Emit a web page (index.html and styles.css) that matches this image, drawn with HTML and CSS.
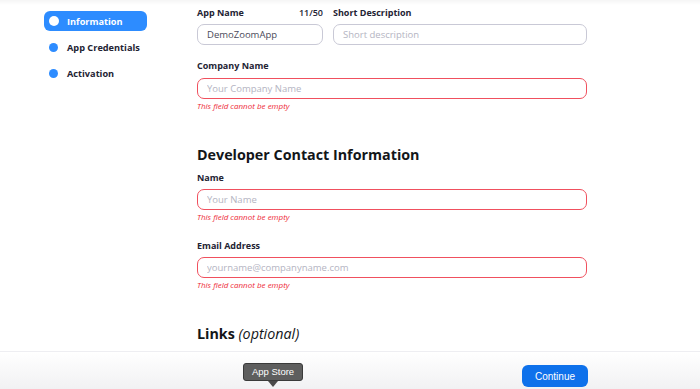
FILE: index.html
```html
<!DOCTYPE html>
<html lang="en">
<head>
  <meta charset="UTF-8">
  <title>Create App - Information</title>
  <meta name="viewport" content="width=device-width, initial-scale=1.0">
  <link rel="stylesheet" href="styles.css">
</head>
<body>

<div class="top-shade"></div>

<div class="page">
  <!-- Steps -->
  <ul class="steps">
    <li class="step active"><span class="dot"></span>Information</li>
    <li class="step"><span class="dot"></span>App Credentials</li>
    <li class="step"><span class="dot"></span>Activation</li>
  </ul>

  <!-- Form -->
  <form class="main">
    <div class="row-top">
      <div class="field app-name">
        <div class="label-line">
          <label>App Name</label>
          <span class="count">11/50</span>
        </div>
        <input type="text" value="DemoZoomApp">
      </div>
      <div class="field short-desc">
        <div class="label-line">
          <label>Short Description</label>
        </div>
        <input type="text" placeholder="Short description">
      </div>
    </div>

    <div class="field company">
      <label>Company Name</label>
      <input type="text" class="invalid" placeholder="Your Company Name">
      <p class="error">This field cannot be empty</p>
    </div>

    <h2 class="section-title">Developer Contact Information</h2>

    <div class="field">
      <label>Name</label>
      <input type="text" class="invalid" placeholder="Your Name">
      <p class="error">This field cannot be empty</p>
    </div>

    <div class="field email">
      <label>Email Address</label>
      <input type="text" class="invalid" placeholder="yourname@companyname.com">
      <p class="error">This field cannot be empty</p>
    </div>

    <h2 class="section-title links">Links <em>(optional)</em></h2>
  </form>
</div>

<div class="footer">
  <div class="tooltip">App Store</div>
  <button type="button" class="continue-btn">Continue</button>
</div>

</body>
</html>
```

FILE: styles.css
```css
body {
  font-family: 'Open Sans', 'Liberation Sans', sans-serif;
  margin: 0;
  padding: 0;
  background: #fff;
  color: #232333;
  height: 389px;
  overflow: hidden;
}

.top-shade {
  position: fixed;
  top: 0;
  left: 0;
  right: 0;
  height: 5px;
  background: linear-gradient(to bottom, rgba(0,0,0,0.04), rgba(0,0,0,0));
}

.page {
  display: flex;
  padding-left: 44px;
}

/* steps */
.steps {
  list-style: none;
  margin: 11px 0 0;
  padding: 0;
  width: 103px;
  display: flex;
  flex-direction: column;
  gap: 6px;
}

.step {
  height: 20px;
  display: flex;
  align-items: center;
  padding-left: 5px;
  font-size: 9.2px;
  font-weight: 700;
  color: #232333;
  border-radius: 6px;
}

.step .dot {
  width: 9px;
  height: 9px;
  border-radius: 50%;
  background: #2d8cff;
  margin-right: 9px;
}

.step.active {
  background: #2d8cff;
  color: #fff;
}
.step.active .dot {
  background: #fff;
  width: 10px;
  height: 10px;
  margin-right: 8px;
}

/* form */
.main {
  width: 390px;
  margin-left: 50px;
  padding-top: 7px;
}

.row-top {
  display: flex;
  gap: 10px;
}
.app-name { width: 126px; }
.short-desc { flex: 1; }

.label-line {
  display: flex;
  justify-content: space-between;
}

label {
  display: block;
  font-size: 9px;
  font-weight: 700;
  line-height: 12px;
  color: #232333;
}

.count {
  font-size: 9px;
  line-height: 12px;
  font-weight: 600;
}

input {
  display: block;
  box-sizing: border-box;
  width: 100%;
  height: 21px;
  margin-top: 5px;
  padding: 0 9px;
  font-family: inherit;
  font-size: 9.5px;
  color: #4a4a5a;
  border: 1px solid #c9c9d6;
  border-radius: 7px;
  background: #fff;
  outline: none;
}
input::placeholder { color: #b4b4c2; }

input.invalid { border-color: #f0505e; }

.company { margin-top: 15px; }
.company input { margin-top: 6px; }

.error {
  margin: 2px 0 0;
  font-size: 8px;
  line-height: 10px;
  font-style: italic;
  font-weight: 400;
  color: #ee2a36;
}

.section-title {
  margin: 34px 0 7px;
  font-size: 14.3px;
  line-height: 20px;
  font-weight: 700;
  color: #131619;
}
.section-title em { font-weight: 400; }

.email { margin-top: 18px; }
.section-title.links { margin-top: 34px; }

/* footer */
.footer {
  position: fixed;
  left: 0;
  right: 0;
  bottom: 0;
  height: 37px;
  border-top: 1px solid #eeeef2;
  background: linear-gradient(to bottom, #fff, #f1f1f3);
}

.continue-btn {
  position: absolute;
  left: 522px;
  top: 13px;
  width: 66px;
  height: 22px;
  border: none;
  border-radius: 6px;
  background: #0e71eb;
  color: #fff;
  font-family: 'Liberation Sans', sans-serif;
  font-size: 10px;
  cursor: pointer;
}

.tooltip {
  position: absolute;
  left: 243px;
  top: 11px;
  width: 60px;
  height: 18px;
  box-sizing: border-box;
  background: #5e5e5e;
  border: 1px solid #3a3a3a;
  border-radius: 3px;
  color: #fff;
  font-family: 'Liberation Sans', sans-serif;
  font-size: 9.5px;
  line-height: 16px;
  text-align: center;
}
.tooltip::after {
  content: "";
  position: absolute;
  left: 24px;
  bottom: -7px;
  border-left: 5px solid transparent;
  border-right: 5px solid transparent;
  border-top: 6px solid #4a4a4a;
}
```
